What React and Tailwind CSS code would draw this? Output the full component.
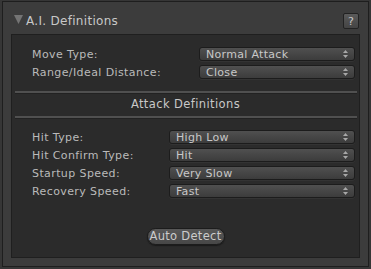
import React from "react";

const font = { fontFamily: '"DejaVu Sans", Verdana, sans-serif' };

const Arrows = () => (
  <svg width="5" height="8" viewBox="0 0 5 8" className="shrink-0">
    <polygon points="2.5,0 5,3 0,3" fill="#a8a8a8" />
    <polygon points="0,5 5,5 2.5,8" fill="#a8a8a8" />
  </svg>
);

const Select = ({ value, className }) => (
  <div
    className={`h-[14px] flex items-center justify-between pl-[6px] pr-[6px] rounded-[3px] border border-[#1c1c1c] bg-gradient-to-b from-[#505050] to-[#3c3c3c] shadow-[0_1px_0_#333] ${className}`}
  >
    <span className="text-[11px] leading-none text-[#c8c8c8] tracking-[0.3px]">{value}</span>
    <Arrows />
  </div>
);

const Row = ({ label, value, selectClass }) => (
  <div className="h-[18px] flex items-center">
    <span className="text-[11px] leading-none text-[#bababa] tracking-[0.4px] flex-1">{label}</span>
    <Select value={value} className={selectClass} />
  </div>
);

const Separator = () => (
  <div className="mx-[3px] mr-[2px] h-[3px] flex flex-col">
    <div className="h-[2px] bg-[#505050]" />
    <div className="h-[1px] bg-[#222]" />
  </div>
);

const App = () => {
  return (
    <div className="w-[371px] h-[269px] bg-[#363636] pt-[1px] pl-[2px] pr-[2px] pb-[2px]" style={font}>
      <div className="h-full border border-[#1e1e1e] bg-[#3c3c3c] flex flex-col">
        {/* Header */}
        <div className="h-[32px] flex items-start pt-[12px] pl-[11px] pr-[9px]">
          <svg width="9" height="9" viewBox="0 0 9 9" className="mr-[3px] mt-[1px]">
            <polygon points="0,0 9,0 4.5,9" fill="#747474" />
          </svg>
          <span className="text-[12px] leading-none text-[#c8c8c8] tracking-[0.3px] flex-1 mt-[1px]">A.I. Definitions</span>
          <div className="w-[16px] h-[16px] mt-[-1px] rounded-[2px] border border-[#222] bg-gradient-to-b from-[#5a5a5a] to-[#444] flex items-center justify-center text-[11px] text-[#c8c8c8] leading-none">
            ?
          </div>
        </div>

        {/* Panel */}
        <div className="flex-1 mx-[8px] mb-[8px] border border-[#1f1f1f] bg-[#2b2b2b] flex flex-col">
          <div className="pt-[10px] pl-[20px] pr-[4px]">
            <Row label="Move Type:" value="Normal Attack" selectClass="w-[156px]" />
            <Row label="Range/Ideal Distance:" value="Close" selectClass="w-[156px]" />
          </div>

          <div className="mt-[10px]">
            <Separator />
          </div>
          <div className="h-[22px] flex items-center justify-center text-[11.5px] text-[#c8c8c8] tracking-[0.4px]">
            Attack Definitions
          </div>
          <Separator />

          <div className="pt-[9px] pl-[20px] pr-[4px]">
            <Row label="Hit Type:" value="High Low" selectClass="w-[186px]" />
            <Row label="Hit Confirm Type:" value="Hit" selectClass="w-[186px]" />
            <Row label="Startup Speed:" value="Very Slow" selectClass="w-[186px]" />
            <Row label="Recovery Speed:" value="Fast" selectClass="w-[186px]" />
          </div>

          <div className="flex justify-center mt-[28px]">
            <div className="w-[78px] h-[17px] rounded-full border border-[#1c1c1c] bg-gradient-to-b from-[#585858] to-[#474747] flex items-center justify-center text-[11.5px] text-[#cccccc] tracking-[0.3px] leading-none shadow-[0_1px_1px_#1a1a1a]">
              Auto Detect
            </div>
          </div>
        </div>
      </div>
    </div>
  );
};

export default App;
